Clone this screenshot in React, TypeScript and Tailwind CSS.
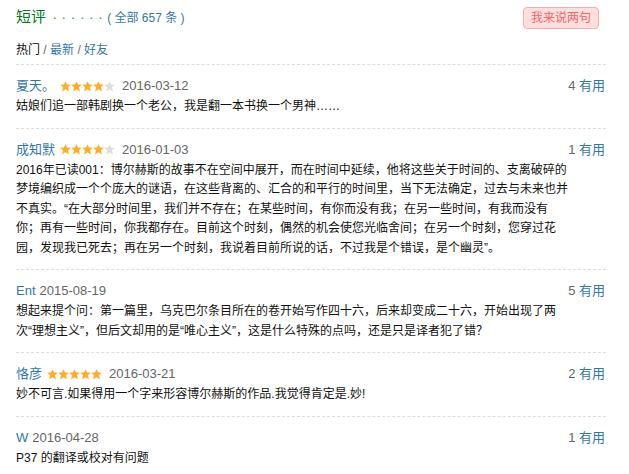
import React from "react";

function Star({ filled }: { filled: boolean }) {
  return (
    <svg width="11" height="11" viewBox="0 0 11 11" className="block">
      <polygon
        points="5.5,0.2 7.05,3.55 10.9,3.85 7.95,6.35 8.95,10.6 5.5,8.35 2.05,10.6 3.05,6.35 0.1,3.85 3.95,3.55"
        fill={filled ? "#ffac2d" : "#dedede"}
      />
    </svg>
  );
}

function Stars({ n }: { n: number }) {
  return (
    <span className="ml-[5px] mr-[7px] flex items-center">
      {[0, 1, 2, 3, 4].map((i) => (
        <Star key={i} filled={i < n} />
      ))}
    </span>
  );
}

type Review = {
  name: string;
  stars?: number;
  date: string;
  votes: number;
  lines: string[];
};

const reviews: Review[] = [
  {
    name: "夏天。",
    stars: 4,
    date: "2016-03-12",
    votes: 4,
    lines: ["姑娘们追一部韩剧换一个老公，我是翻一本书换一个男神……"],
  },
  {
    name: "成知默",
    stars: 4,
    date: "2016-01-03",
    votes: 1,
    lines: [
      "2016年已读001：博尔赫斯的故事不在空间中展开，而在时间中延续，他将这些关于时间的、支离破碎的",
      "梦境编织成一个个庞大的谜语，在这些背离的、汇合的和平行的时间里，当下无法确定，过去与未来也并",
      "不真实。“在大部分时间里，我们并不存在；在某些时间，有你而没有我；在另一些时间，有我而没有",
      "你；再有一些时间，你我都存在。目前这个时刻，偶然的机会使您光临舍间；在另一个时刻，您穿过花",
      "园，发现我已死去；再在另一个时刻，我说着目前所说的话，不过我是个错误，是个幽灵”。",
    ],
  },
  {
    name: "Ent",
    date: "2015-08-19",
    votes: 5,
    lines: [
      "想起来提个问：第一篇里，乌克巴尔条目所在的卷开始写作四十六，后来却变成二十六，开始出现了两",
      "次“理想主义”，但后文却用的是“唯心主义”，这是什么特殊的点吗，还是只是译者犯了错？",
    ],
  },
  {
    name: "恪彦",
    stars: 5,
    date: "2016-03-21",
    votes: 2,
    lines: ["妙不可言.如果得用一个字来形容博尔赫斯的作品.我觉得肯定是.妙!"],
  },
  {
    name: "W",
    date: "2016-04-28",
    votes: 1,
    lines: ["P37 的翻译或校对有问题"],
  },
];

export default function App() {
  return (
    <div className="w-[629px] h-[474px] overflow-hidden bg-white font-['Liberation_Sans','Noto_Sans_CJK_SC',sans-serif] text-[12px] text-[#111]">
      <div className="ml-[16px] w-[590px]">
        <div className="flex items-start justify-between pt-[6px]">
          <div className="whitespace-nowrap leading-[21px]">
            <span className="text-[15px] text-[#072]">短评</span>
            <span className="ml-[2px] text-[15px] text-[#5a9a6a]"> · · · · · · </span>
            <span className="text-[12px] text-[#37a]">( 全部 657 条 )</span>
          </div>
          <div className="mr-[7px] mt-[1px] h-[22px] rounded-[4px] border border-[#ffaaaa] bg-[#ffdede] px-[7px] text-[12px] leading-[20px] text-[#ee6666]">
            我来说两句
          </div>
        </div>

        <div className="mt-[12px] border-b border-dashed border-[#ddd] pb-[5px] leading-[18px]">
          <span className="text-[#111]">热门</span>
          <span className="text-[#666]"> / </span>
          <span className="text-[#37a]">最新</span>
          <span className="text-[#666]"> / </span>
          <span className="text-[#37a]">好友</span>
        </div>

        {reviews.map((r, idx) => (
          <div
            key={idx}
            className={
              idx < reviews.length - 1
                ? "border-b border-dashed border-[#ddd] pb-[11px] pt-[10px]"
                : "pb-[11px] pt-[10px]"
            }
          >
            <div className="flex h-[22px] items-center whitespace-nowrap text-[13px]">
              <span className="text-[#37a]">{r.name}</span>
              {r.stars !== undefined ? (
                <Stars n={r.stars} />
              ) : (
                <span className="w-[4px]" />
              )}
              <span className="text-[#666]">{r.date}</span>
              <span className="ml-auto mr-[1px]">
                <span className="text-[#666]">{r.votes}</span>
                <span className="text-[#37a]"> 有用</span>
              </span>
            </div>
            <div className="whitespace-nowrap leading-[19.5px] text-[#111]">
              {r.lines.map((l, i) => (
                <div key={i}>{l}</div>
              ))}
            </div>
          </div>
        ))}
      </div>
    </div>
  );
}
